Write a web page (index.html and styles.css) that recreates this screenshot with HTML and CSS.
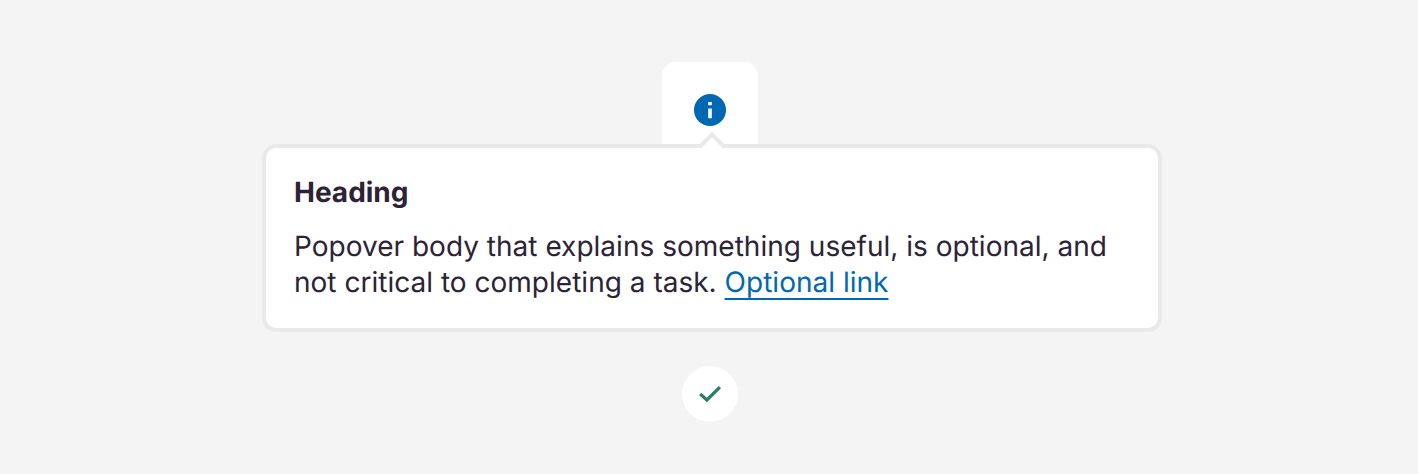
FILE: index.html
```html
<!DOCTYPE html>
<html lang="en">
<head>
<meta charset="utf-8">
<title>Popover</title>
<link rel="stylesheet" href="styles.css">
</head>
<body>
<main class="example">
  <div class="trigger">
    <svg class="info-icon" viewBox="0 0 32 32" aria-label="Information">
      <circle cx="16" cy="16" r="16" fill="#0068b3"/>
      <path d="M14.2 8h3.6v3.2h-3.6zM14.2 14.4h3.6v9.8h-3.6z" fill="#fff"/>
    </svg>
  </div>
  <section class="popover">
    <svg class="arrow" viewBox="0 0 30 18" aria-hidden="true">
      <path d="M1 18 15 4 29 18Z" fill="#fff"/>
      <path d="M2.5 16 15 3.5 27.5 16" fill="none" stroke="#e9e9eb" stroke-width="4"/>
    </svg>
    <h1 class="heading">Heading</h1>
    <p class="body">Popover body that explains something useful, is optional, and<br>not critical to completing a task. <a class="link" href="#">Optional link</a></p>
  </section>
  <div class="status">
    <svg class="check-icon" viewBox="0 0 24 24" aria-label="Recommended">
      <path d="M2.2 12 8.9 18 21.9 5.2" fill="none" stroke="#258065" stroke-width="3.2"/>
    </svg>
  </div>
</main>
</body>
</html>
```

FILE: styles.css
```css
* { box-sizing: border-box; }
body { margin: 0; background: #f4f4f4; color: #2d2337; font-family: Inter, sans-serif; text-rendering: geometricPrecision; }
.example { height: 474px; padding-top: 62px; display: flex; flex-direction: column; align-items: center; }
.trigger { width: 96px; height: 82px; margin-left: 2px; padding: 32px; background: #fff; border-radius: 14px 14px 0 0; }
.info-icon { display: block; width: 32px; height: 32px; }
.popover { position: relative; width: 900px; height: 188px; margin-left: 6px; padding: 26px 28px; background: #fff; border: 4px solid #e9e9eb; border-radius: 14px; }
.arrow { position: absolute; left: 431px; top: -17px; width: 30px; height: 18px; }
.heading { margin: 0; font-size: 28px; line-height: 36px; font-weight: 700; }
.body { margin: 18px 0 0; font-size: 28px; line-height: 36px; letter-spacing: 0.015px; white-space: nowrap; }
.link { color: #0068b3; text-decoration-thickness: 2px; text-underline-offset: 6px; text-decoration-skip-ink: none; }
.status { display: flex; align-items: center; justify-content: center; width: 56px; height: 56px; margin: 34px 0 0 2px; background: #fff; border-radius: 50%; }
.check-icon { width: 24px; height: 24px; }
```
